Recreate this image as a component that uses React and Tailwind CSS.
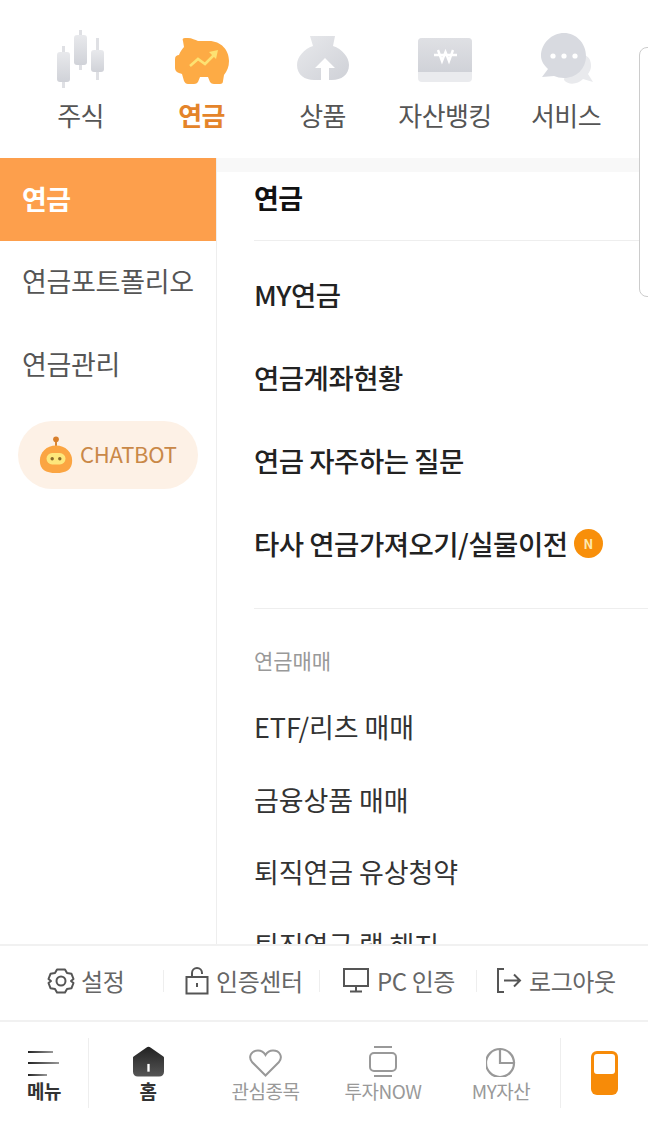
import React from "react";

const font = { fontFamily: '"Noto Sans CJK KR", "Noto Sans", sans-serif' };

const CandleIcon = () => (
  <svg width="50" height="58" viewBox="0 0 50 58">
    <defs>
      <linearGradient id="cg" x1="0" y1="0" x2="0" y2="1">
        <stop offset="0" stopColor="#e8e9ec" />
        <stop offset="1" stopColor="#d0d2d8" />
      </linearGradient>
    </defs>
    <rect x="6" y="16" width="3" height="42" fill="#dfe0e4" />
    <rect x="1" y="22" width="13" height="30" rx="3" fill="url(#cg)" />
    <rect x="23" y="0" width="3" height="40" fill="#dfe0e4" />
    <rect x="18" y="5" width="13" height="30" rx="3" fill="url(#cg)" />
    <rect x="40" y="8" width="3" height="42" fill="#dfe0e4" />
    <rect x="35" y="20" width="13" height="22" rx="3" fill="url(#cg)" />
  </svg>
);

const PigIcon = () => (
  <svg width="54" height="48" viewBox="0 0 54 48">
    <path d="M13 1c4 0 7 2 10 3h11c12 0 20 9 20 20 0 6-2 10-5 14l-1 6c0 2-1 3-3 3h-6c-2 0-3-1-4-2l-2-5h-8l-2 5c-1 1-2 2-4 2h-6c-2 0-3-1-4-3l-2-7c-3-1-7-2-7-6v-9c0-3 2-4 4-4 1-3 3-6 5-8l-1-6c-1-2 0-3 2-3z" fill="#fdab45" />
    <path d="M15 29l8-7 7 5 9-9" fill="none" stroke="#fde272" strokeWidth="2.6" />
    <path d="M34 15l9-2-2 9z" fill="#fde272" />
  </svg>
);

const PouchIcon = () => (
  <svg width="52" height="46" viewBox="0 0 52 46">
    <defs>
      <linearGradient id="pg" x1="0" y1="0" x2="1" y2="1">
        <stop offset="0" stopColor="#e8e9ec" />
        <stop offset="1" stopColor="#cfd1d7" />
      </linearGradient>
    </defs>
    <path d="M13 0h25l-2 10c9 3 16 11 16 19 0 10-8 15-17 15H17C8 44 0 39 0 29c0-8 7-16 16-19z" fill="url(#pg)" />
    <path d="M28 22l10 10h-6v14h-8V32h-6z" fill="#fff" />
  </svg>
);

const BankIcon = () => (
  <svg width="54" height="44" viewBox="0 0 54 44">
    <defs>
      <linearGradient id="bg" x1="0" y1="0" x2="0" y2="1">
        <stop offset="0" stopColor="#dfe0e4" />
        <stop offset="1" stopColor="#d0d2d8" />
      </linearGradient>
    </defs>
    <rect x="0" y="0" width="54" height="44" rx="4" fill="#eaebee" />
    <path d="M0 4a4 4 0 014-4h46a4 4 0 014 4v30H0z" fill="url(#bg)" />
    <path d="M16 17h23M20 12l4 11 3.500-9 3.500 9 4-11" fill="none" stroke="#fff" strokeWidth="2.400" />
  </svg>
);

const ChatIcon = () => (
  <svg width="53" height="52" viewBox="0 0 53 52">
    <path d="M26 24c8-6 20-4 23 3 2 6 1 10-2 14l5 8-10-3c-5 5-14 7-19 1z" fill="#e9eaed" />
    <path d="M23 0c12 0 22 10 22 23S35 45 23 45c-4 0-7-1-10-2L1 44l6-8C3 32 0 28 0 23 0 10 11 0 23 0z" fill="#d8dae0" />
    <circle cx="12" cy="23" r="2.600" fill="#fff" />
    <circle cx="23" cy="23" r="2.600" fill="#fff" />
    <circle cx="34" cy="23" r="2.600" fill="#fff" />
  </svg>
);

const TopItem = ({ icon, label, active, iconClass, className = "w-[121px]" }) => (
  <div className={`shrink-0 flex flex-col items-center ${className}`}>
    <div className={`h-[60px] flex items-end justify-center ${iconClass}`}>{icon}</div>
    <span className={`mt-[12px] text-[26px] leading-[30px] tracking-[-0.6px] whitespace-nowrap ${active ? "text-[#e4842a] font-bold" : "text-[#555555]"}`}>
      {label}
    </span>
  </div>
);

const ChatbotIcon = () => (
  <svg width="36" height="38" viewBox="0 0 36 40">
    <circle cx="18" cy="3.500" r="3" fill="#d87f2c" />
    <rect x="17" y="4" width="2" height="8" fill="#d87f2c" />
    <path d="M18 10c10 0 17 7 17 16 0 9-6 13-17 13S1 35 1 26c0-9 7-16 17-16z" fill="#fba542" />
    <rect x="8" y="18" width="20" height="12" rx="6" fill="#fde77c" />
    <circle cx="14" cy="24" r="1.800" fill="#8a6a2a" />
    <circle cx="22" cy="24" r="1.800" fill="#8a6a2a" />
  </svg>
);

const SideItem = ({ label }) => (
  <div className="h-[83px] pl-[22px] pb-[2px] flex items-center text-[27px] tracking-[-0.3px] text-[#555555]">{label}</div>
);

const MainItem = ({ label, badge }) => (
  <div className="h-[83px] flex items-center text-[27.5px] font-medium tracking-[-0.5px] text-[#222222]">
    {label}
    {badge && (
      <span className="ml-[6px] w-[29px] h-[29px] rounded-full bg-[#f88f0a] text-[#fde9b0] text-[13px] font-bold flex items-center justify-center">
        N
      </span>
    )}
  </div>
);

const SubItem = ({ label }) => (
  <div className="h-[72.5px] flex items-center text-[27px] tracking-[-0.1px] text-[#333333]">{label}</div>
);

const GearIcon = () => (
  <svg width="28" height="28" viewBox="0 0 28 28" fill="none" stroke="#555555" strokeWidth="2">
    <path d="M10 2.500h8l2 3.500 4.500.8 2 5.200-2.500 2 2.500 2-2 5.200-4.500.8-2 3.500h-8l-2-3.500-4.500-.8-2-5.200 2.500-2-2.500-2 2-5.200 4.500-.8z" strokeLinejoin="round" />
    <circle cx="14" cy="14" r="4.500" />
  </svg>
);

const LockIcon = () => (
  <svg width="24" height="28" viewBox="0 0 24 28" fill="none" stroke="#555555" strokeWidth="2">
    <rect x="1.500" y="10" width="21" height="16.500" />
    <path d="M7 10V6a5 5 0 0110 0v1" />
    <path d="M12 16v4" />
  </svg>
);

const MonitorIcon = () => (
  <svg width="26" height="25" viewBox="0 0 26 25" fill="none" stroke="#555555" strokeWidth="2">
    <rect x="1" y="1" width="24" height="17" />
    <path d="M13 18v5M7 23.500h12" />
  </svg>
);

const LogoutIcon = () => (
  <svg width="26" height="25" viewBox="0 0 26 25" fill="none" stroke="#555555" strokeWidth="2">
    <path d="M8 1H2v23h6" />
    <path d="M8 12.500h16M18 6.500l6 6-6 6" />
  </svg>
);

const UtilItem = ({ icon, label, className }) => (
  <div className={`flex items-center text-[24px] tracking-[-0.4px] text-[#666666] whitespace-nowrap ${className}`}>
    {icon}
    <span>{label}</span>
  </div>
);

const Sep = () => <div className="w-px h-[22px] bg-[#eeeeee] shrink-0" />;

const NavItem = ({ icon, label, dark, className }) => (
  <div className={`flex flex-col items-center shrink-0 pt-[5px] h-[70px] ${className}`}>
    <div className="h-[34px] flex items-end justify-center">{icon}</div>
    <span className={`mt-[3px] text-[19px] leading-[22px] tracking-[-0.5px] whitespace-nowrap ${dark ? "text-[#333333] font-bold" : "text-[#999999]"}`}>
      {label}
    </span>
  </div>
);

const App = () => {
  return (
    <div className="relative w-[648px] h-[1127px] bg-white overflow-hidden flex flex-col" style={font}>
      <div className="h-[158px] shrink-0 flex items-start pt-[28px] pl-[20px]">
        <TopItem iconClass="" icon={<CandleIcon />} label="주식" />
        <TopItem iconClass="pb-[3px]" icon={<PigIcon />} label="연금" active />
        <TopItem iconClass="pb-[6px]" icon={<PouchIcon />} label="상품" />
        <TopItem className="w-[122px] pl-[2px]" iconClass="pb-[6px]" icon={<BankIcon />} label="자산뱅킹" />
        <TopItem className="w-[122px]" iconClass="pb-[3px] pl-[2px]" icon={<ChatIcon />} label="서비스" />
      </div>

      <div className="flex-1 flex min-h-0">
        <div className="w-[217px] shrink-0 border-r border-[#eeeeee]">
          <div className="h-[83px] pl-[22px] flex items-center bg-[#fd9f4c] text-white text-[27px] font-bold tracking-[-0.6px]">
            연금
          </div>
          <SideItem label="연금포트폴리오" />
          <SideItem label="연금관리" />
          <div className="ml-[18px] mt-[14px] w-[180px] h-[68px] rounded-full bg-[#fdf1e6] flex items-center pl-[20px] gap-[6px]">
            <ChatbotIcon />
            <span className="pb-[3px] text-[22px] text-[#c98848] tracking-[-0.3px]">CHATBOT</span>
          </div>
        </div>

        <div className="flex-1 min-w-0 overflow-hidden">
          <div className="h-[14px] bg-[#f8f8f8]" />
          <div className="pl-[37px]">
            <div className="h-[69px] pb-[16px] flex items-center text-[27px] font-bold tracking-[-0.6px] text-[#111111] border-b border-[#eeeeee]">
              연금
            </div>
            <div className="pt-[12px] pb-[23px] border-b border-[#eeeeee]">
              <MainItem label="MY연금" />
              <MainItem label="연금계좌현황" />
              <MainItem label="연금 자주하는 질문" />
              <MainItem label="타사 연금가져오기/실물이전" badge />
            </div>
            <div className="h-[72px] pt-[32px] flex items-center text-[21px] tracking-[-0.1px] text-[#999999]">연금매매</div>
            <div className="mt-[10px]">
              <SubItem label="ETF/리츠 매매" />
              <SubItem label="금융상품 매매" />
              <SubItem label="퇴직연금 유상청약" />
              <SubItem label="퇴직연금 랩 해지" />
            </div>
          </div>
        </div>
      </div>

      <div className="h-[76px] shrink-0 bg-white border-t-2 border-[#f1f1f1] flex items-center pb-[5px]">
        <UtilItem className="ml-[47px] w-[116px] gap-[6px]" icon={<GearIcon />} label="설정" />
        <Sep />
        <UtilItem className="ml-[21px] w-[134px] gap-[7px]" icon={<LockIcon />} label="인증센터" />
        <Sep />
        <UtilItem className="ml-[23px] w-[133px] gap-[8px]" icon={<MonitorIcon />} label="PC 인증" />
        <Sep />
        <UtilItem className="ml-[19px] gap-[7px]" icon={<LogoutIcon />} label="로그아웃" />
      </div>

      <div className="h-[107px] shrink-0 bg-white border-t-2 border-[#f1f1f1] flex items-start pt-[16px]">
        <NavItem
          className="w-[89px] border-r border-[#eeeeee]"
          dark
          label="메뉴"
          icon={
            <svg width="32" height="26" viewBox="0 0 32 26">
              <defs>
                <linearGradient id="mg" x1="0" y1="0" x2="1" y2="0">
                  <stop offset="0" stopColor="#222222" />
                  <stop offset="1" stopColor="#999999" />
                </linearGradient>
              </defs>
              <rect x="0" y="0" width="25" height="2" fill="url(#mg)" />
              <rect x="0" y="11" width="31" height="2" fill="url(#mg)" />
              <rect x="0" y="23" width="19" height="2" fill="url(#mg)" />
            </svg>
          }
        />
        <NavItem
          className="w-[118px]"
          dark
          label="홈"
          icon={
            <svg width="31" height="31" viewBox="0 0 32 31">
              <defs>
                <linearGradient id="hg" x1="0" y1="0" x2="0" y2="1">
                  <stop offset="0" stopColor="#222222" />
                  <stop offset="1" stopColor="#555555" />
                </linearGradient>
              </defs>
              <path d="M14 1c1-1 3-1 4 0l13 9c1 .6 1 1 1 2v14c0 3-2 5-5 5H5c-3 0-5-2-5-5V12c0-1 0-1.400 1-2z" fill="url(#hg)" />
              <rect x="14.800" y="18" width="2.400" height="8" fill="#fff" />
            </svg>
          }
        />
        <NavItem
          className="w-[117px]"
          label="관심종목"
          icon={
            <svg width="33" height="28" viewBox="0 0 33 28" fill="none" stroke="#999999" strokeWidth="2">
              <path d="M16.500 26.500L3 13C-1 8 2 1.500 9 1.500c3 0 6 2 7.500 4.500C18 3.500 21 1.500 24 1.500c7 0 10 6.500 6 11.500z" />
            </svg>
          }
        />
        <NavItem
          className="w-[118px]"
          label="투자NOW"
          icon={
            <svg width="28" height="31" viewBox="0 0 28 31" fill="none" stroke="#999999" strokeWidth="2">
              <path d="M5 1h18M5 30h18" />
              <rect x="1" y="7" width="26" height="18" rx="4" />
            </svg>
          }
        />
        <NavItem
          className="w-[118px]"
          label="MY자산"
          icon={
            <svg width="30" height="31" viewBox="0 0 30 31" fill="none" stroke="#999999" strokeWidth="2.200">
              <path d="M14 3a14 14 0 1014 14H14z" />
              <path d="M14 3a14 14 0 0114 14" />
            </svg>
          }
        />
        <div className="flex-1 border-l border-[#eeeeee] h-[70px] flex justify-center">
          <div className="w-[27px] h-[44px] mt-[13px] rounded-[6px] bg-[#f78b08] p-[3px]">
            <div className="w-full h-[20px] rounded-[3px] bg-white" />
          </div>
        </div>
      </div>

      <div className="absolute left-[639px] top-[47px] w-[20px] h-[250px] rounded-[8px] border border-[#cccccc] bg-white" />
    </div>
  );
};

export default App;
